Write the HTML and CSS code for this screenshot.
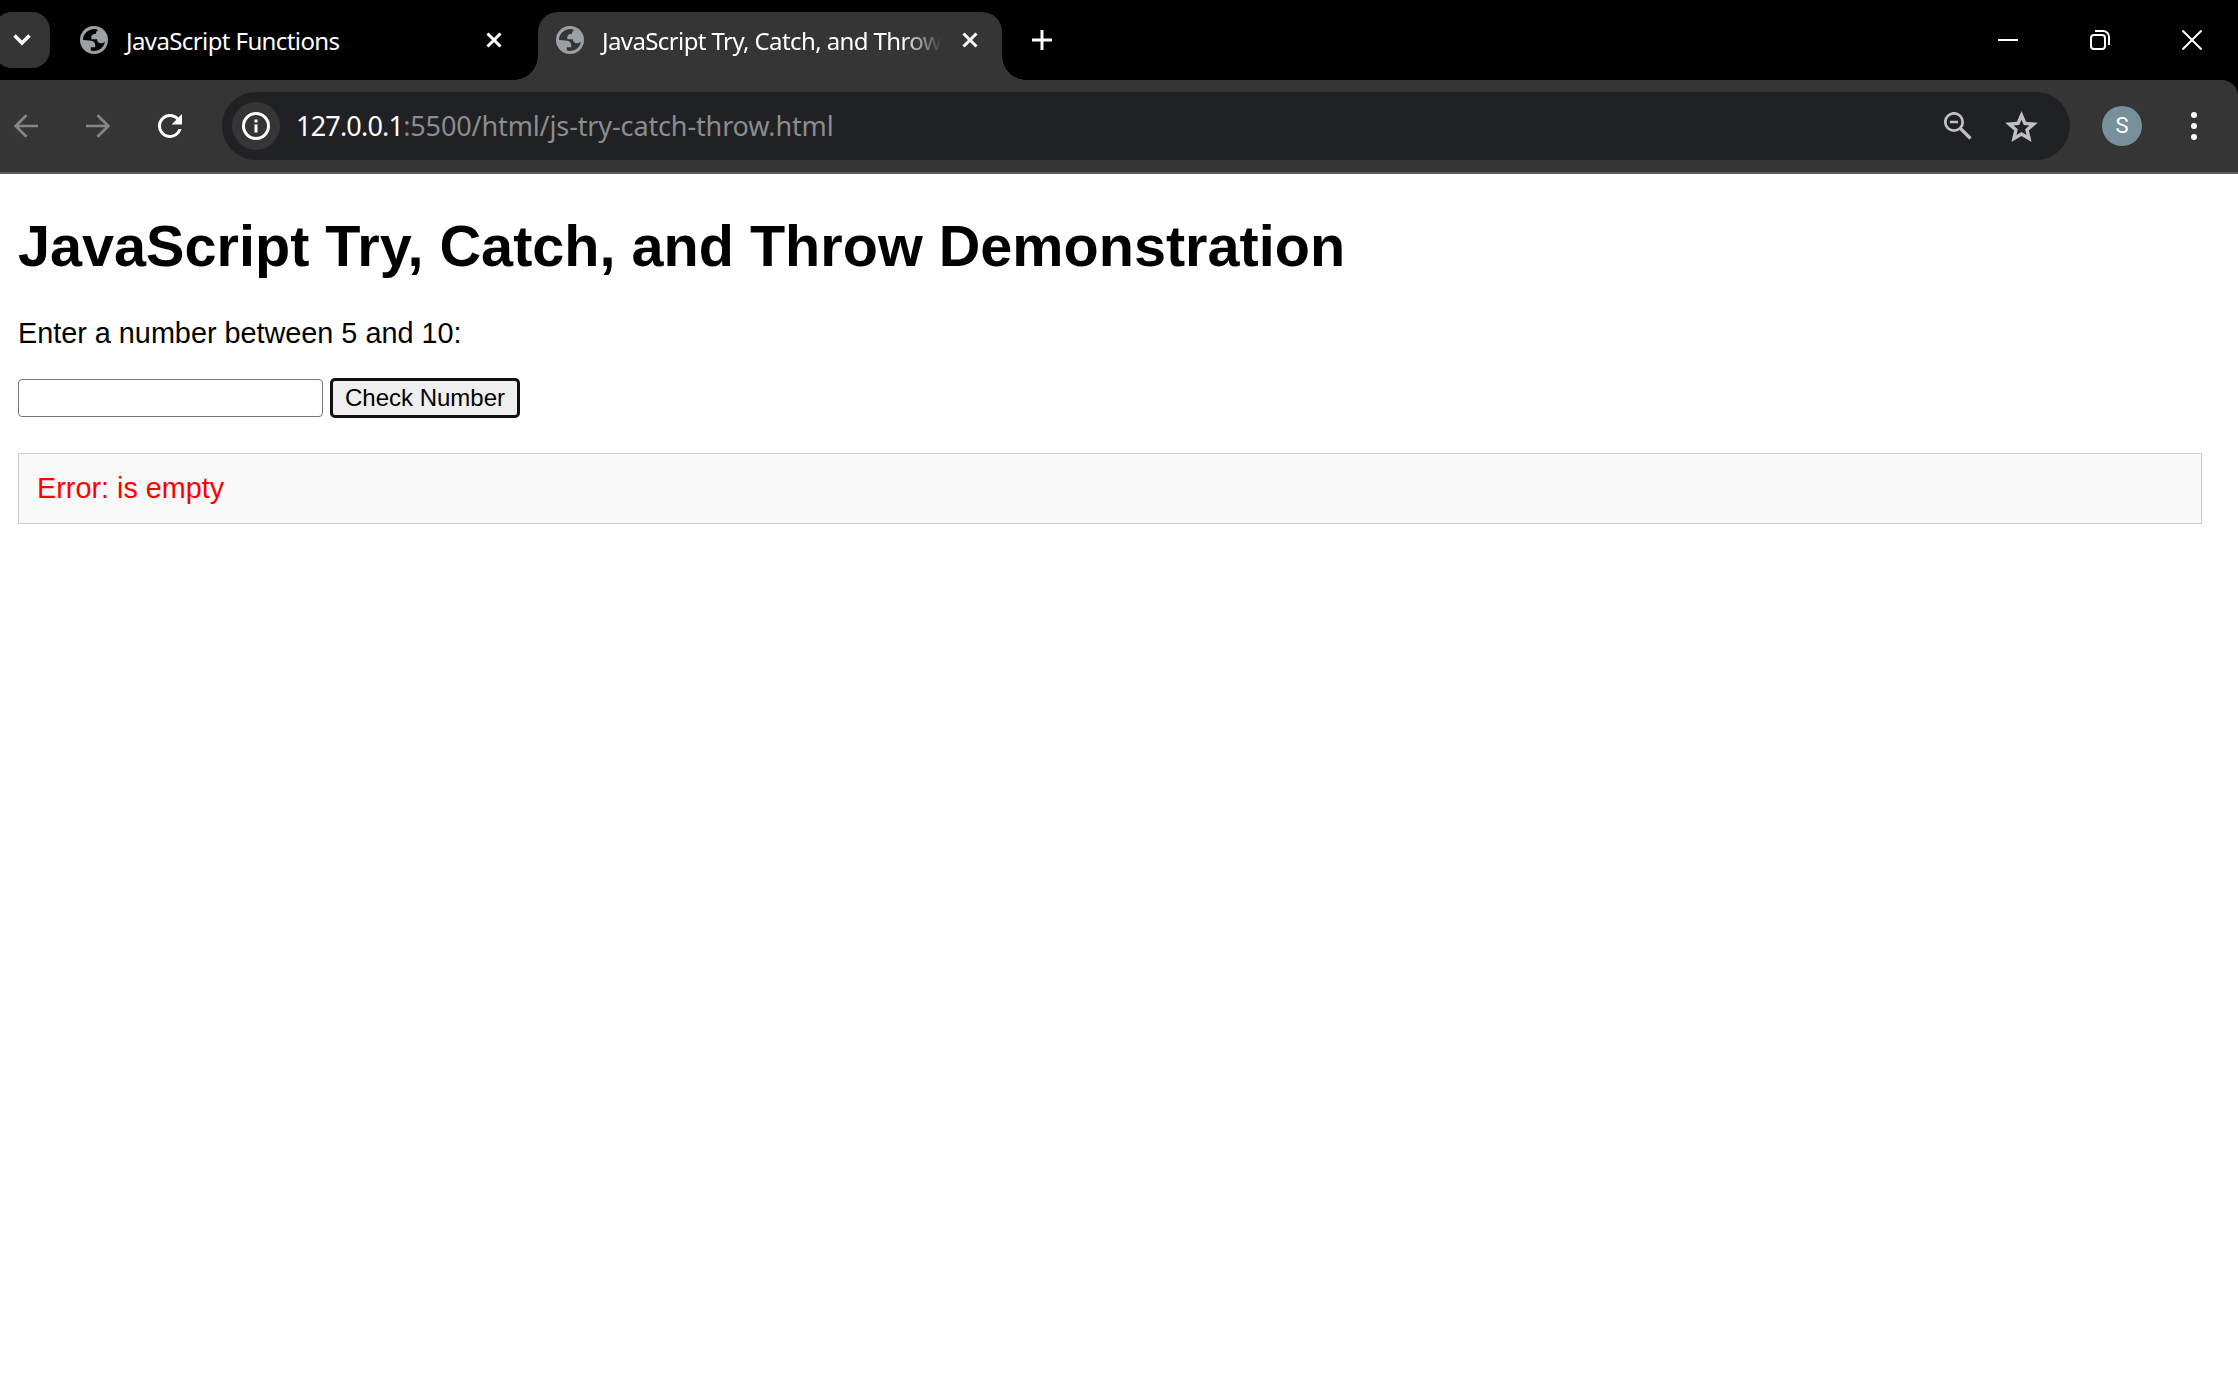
FILE: index.html
```html
<!DOCTYPE html>
<html lang="en">
<head>
<meta charset="utf-8">
<title>JavaScript Try, Catch, and Throw</title>
<link rel="stylesheet" href="styles.css">
</head>
<body>
<svg width="0" height="0" class="defs">
  <symbol id="globe" viewBox="0 0 28 28">
    <circle cx="14" cy="14" r="14"/>
    <path class="land" d="M3 14C3 8 8 3 14.500 3C17 3 17.800 3.800 17.800 4.600C16.500 5.400 16 6.300 16 7.800C13 7.800 11.300 9 11.300 11.200V13.300H17C17 16 18.500 17.300 21 17.300C23 17.300 24.300 16.600 25 15.600C24 21.500 19.500 25 14 25C12.500 25 11.500 24.600 10.800 24.300V21.200H15.200C15.800 17 14 14.700 9.500 14.500Z"/>
  </symbol>
  <symbol id="close" viewBox="0 0 16 16"><path d="M1.500 1.500l13 13M14.500 1.500l-13 13" fill="none" stroke="currentColor" stroke-width="3"/></symbol>
</svg>
<header class="chrome">
  <div class="tabstrip">
    <button class="tab-search" aria-label="Search tabs"><svg width="18" height="12" viewBox="0 0 18 12"><path d="M1.500 1.500L9 9l7.500-7.500" fill="none" stroke="currentColor" stroke-width="3.500"/></svg></button>
    <div class="tab">
      <svg class="globe"><use href="#globe"/></svg>
      <span class="tab-title">JavaScript Functions</span>
      <svg class="close"><use href="#close"/></svg>
    </div>
    <div class="tab active">
      <svg class="globe"><use href="#globe"/></svg>
      <span class="tab-title">JavaScript Try, Catch, and Throw</span>
      <svg class="close"><use href="#close"/></svg>
    </div>
    <svg class="new-tab" width="20" height="20" viewBox="0 0 20 20"><path d="M10 0v20M0 10h20" stroke="#fff" stroke-width="3"/></svg>
    <div class="window-controls">
      <svg width="20" height="20" viewBox="0 0 20 20"><path d="M0 10h20" stroke="#fff" stroke-width="2"/></svg>
      <svg width="20" height="20" viewBox="0 0 20 20" fill="none" stroke="#fff" stroke-width="2"><rect x="1" y="5" width="14" height="14" rx="3"/><path d="M5 1h8a6 6 0 0 1 6 6v8"/></svg>
      <svg width="20" height="20" viewBox="0 0 20 20"><path d="M.5.5l19 19M19.500.5l-19 19" stroke="#fff" stroke-width="2"/></svg>
    </div>
  </div>
  <div class="toolbar">
    <nav class="nav">
      <svg class="dim" width="24" height="24" viewBox="0 0 24 24"><path d="M24 12H2M12.500 1.200L1.700 12l10.800 10.800" fill="none" stroke="currentColor" stroke-width="2.700"/></svg>
      <svg class="dim" width="24" height="24" viewBox="0 0 24 24"><path d="M0 12h22M11.500 1.200L22.300 12 11.500 22.800" fill="none" stroke="currentColor" stroke-width="2.700"/></svg>
      <svg width="24" height="24" viewBox="4 4 16 16"><path d="M17.650 6.350A7.958 7.958 0 0 0 12 4a8 8 0 1 0 7.730 10h-2.080A6 6 0 1 1 12 6c1.660 0 3.140.690 4.220 1.780L13 11h7V4z" fill="#fff"/></svg>
    </nav>
    <div class="omnibox">
      <span class="site-info"><svg width="28" height="28" viewBox="0 0 28 28"><circle cx="14" cy="14" r="12.500" fill="none" stroke="#fff" stroke-width="3"/><path d="M12.500 12.500h3v8h-3zM12.500 7.500h3v3h-3z" fill="#fff"/></svg></span>
      <span class="url"><b>127.0.0.1</b>:5500/html/js-try-catch-throw.html</span>
      <svg class="zoom" width="28" height="28" viewBox="0 0 28 28" fill="none" stroke="currentColor"><circle cx="10" cy="10" r="8.700" stroke-width="2.700"/><path d="M16 16l10.500 10.500" stroke-width="3.200"/><path d="M6 10h8" stroke-width="2.500"/></svg>
      <svg class="star" width="33" height="31" viewBox="2 2 20 19"><path fill-rule="evenodd" d="M22 9.240L14.810 8.630 12 2 9.190 8.630 2 9.240 7.460 13.970 5.820 21 12 17.270 18.180 21 16.540 13.970zM16.900 10.900L13.400 10.600 12 7.300 10.600 10.600 7.100 10.900 9.770 13.220 8.970 16.650 12 14.820 15.030 16.650 14.230 13.220z" fill="currentColor"/></svg>
    </div>
    <span class="avatar">S</span>
    <svg class="menu" width="6" height="28" viewBox="0 0 6 28" fill="#fff"><circle cx="3" cy="3" r="3"/><circle cx="3" cy="14" r="3"/><circle cx="3" cy="25" r="3"/></svg>
  </div>
</header>
<main class="page">
  <h1>JavaScript Try, Catch, and Throw Demonstration</h1>
  <p class="prompt">Enter a number between 5 and 10:</p>
  <div class="form">
    <input class="number" type="text" aria-label="Number">
    <button class="check" type="button">Check Number</button>
  </div>
  <div class="result">Error: is empty</div>
</main>
</body>
</html>
```
FILE: styles.css
```css
* { box-sizing: border-box; }
body { margin: 0; background: #fff; color: #000; font-family: "Liberation Sans", Arial, sans-serif; overflow: hidden; }
svg { display: block; flex: none; }
.defs { position: absolute; }
.chrome { background: #000; color: #fff; font-family: "Noto Sans", "Open Sans", sans-serif; }

.tabstrip { display: flex; height: 80px; padding-top: 12px; }
.tab-search { display: flex; align-items: center; justify-content: center; width: 56px; height: 56px; margin-left: -6px; padding: 0; border: 0; border-radius: 18px; background: #353535; color: #fff; }
.tab { --tab-color: #000; display: flex; align-items: flex-start; width: 464px; height: 68px; padding: 14px 24px 0 18px; background: var(--tab-color); }
.tab:not(.active) { margin-left: 12px; }
.tab.active { --tab-color: #353535; position: relative; margin-left: 12px; border-radius: 20px 20px 0 0; }
.tab.active::before, .tab.active::after { content: ""; position: absolute; bottom: 0; width: 24px; height: 24px; }
.tab.active::before { right: 100%; background: radial-gradient(circle at 0 0, transparent 23.5px, #353535 24px); }
.tab.active::after { left: 100%; background: radial-gradient(circle at 100% 0, transparent 23.5px, #353535 24px); }
.globe { width: 28px; height: 28px; fill: #9aa0a6; }
.land { fill: var(--tab-color); }
.tab-title { padding-left: 6px; margin-left: 12px; white-space: nowrap; font-size: 24px; line-height: 30px; letter-spacing: -0.6px; }
.active .tab-title { flex: 0 0 342px; -webkit-mask-image: linear-gradient(90deg, #000 306px, transparent 346px); mask-image: linear-gradient(90deg, #000 306px, transparent 346px); }
.close { width: 16px; height: 16px; margin-top: 6px; margin-left: auto; }
.new-tab { margin: 18px 0 0 30px; }
.window-controls { display: flex; gap: 72px; margin: 18px 36px 0 auto; }

.toolbar { display: flex; align-items: center; height: 94px; padding-left: 14px; background: #353535; border-bottom: 2px solid #5f5f5f; border-top-right-radius: 16px; }
.nav { display: flex; gap: 48px; }
.dim { color: #868686; }
.omnibox { display: flex; align-items: center; width: 1848px; height: 68px; margin-left: 40px; padding: 0 32px 0 10px; border-radius: 34px; background: #202124; color: #c0c0c0; }
.site-info { display: flex; align-items: center; justify-content: center; width: 48px; height: 48px; border-radius: 50%; background: #353535; }
.url { margin-left: 16px; color: #8c8c8c; font-size: 27px; line-height: 36px; letter-spacing: -0.13px; white-space: nowrap; }
.url b { font-weight: 400; color: #fff; letter-spacing: -0.8px; }
.zoom { margin-left: auto; }
.star { margin-left: 33px; }
.avatar { display: flex; align-items: center; justify-content: center; width: 40px; height: 40px; margin-left: 32px; border-radius: 50%; background: #78909c; font: 22px/40px Roboto, sans-serif; }
.menu { margin-left: 49px; }

.page { padding: 0 36px 0 18px; }
h1 { margin: 38px 0 0; font-size: 57.6px; line-height: 69px; }
.prompt { margin: 35px 0 0; font-size: 28.8px; line-height: 34px; }
.form { display: flex; align-items: center; gap: 7px; height: 40px; margin-top: 28px; }
.number { width: 305px; height: 38px; border: 1px solid #767676; border-radius: 4px; background: #fff; }
.check { width: 190px; height: 40px; padding: 0; border: 3px solid #101010; border-radius: 5px; background: #efefef; color: #000; font: 24px/32px "Liberation Sans", Arial, sans-serif; white-space: nowrap; }
.result { height: 71px; margin-top: 35px; padding: 17px 18px; border: 1px solid #ccc; background: #f9f9f9; color: #f00; font-size: 28.8px; line-height: 34px; }
```
